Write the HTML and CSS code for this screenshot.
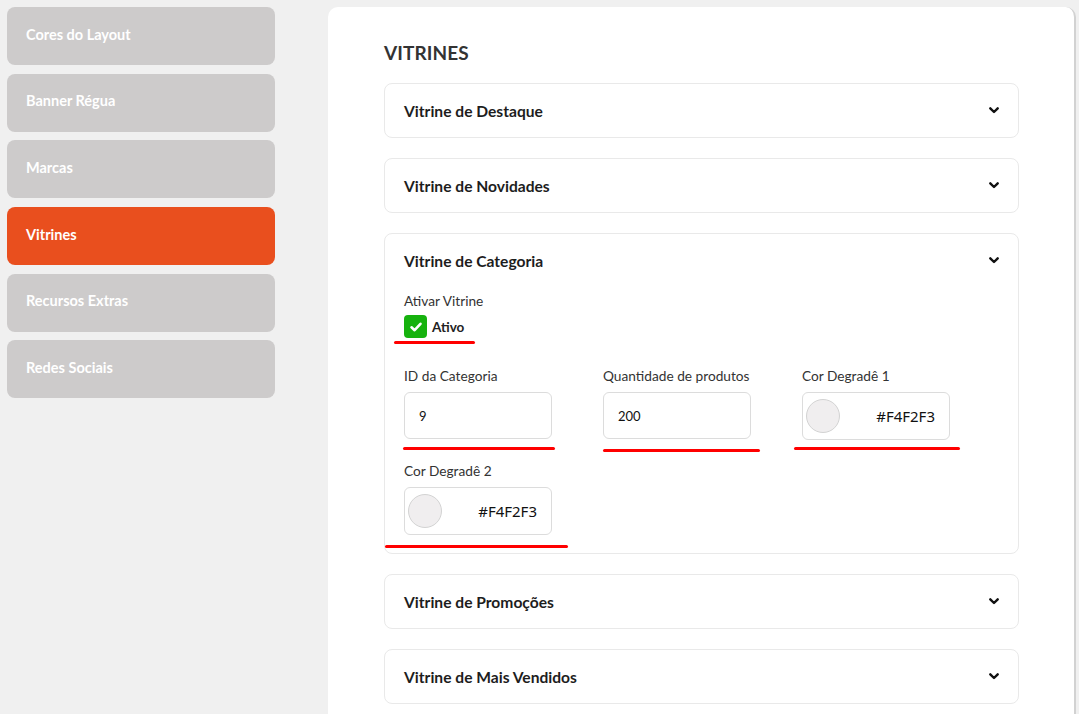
FILE: index.html
```html
<!DOCTYPE html>
<html lang="pt-BR">
<head>
<meta charset="utf-8">
<title>Vitrines</title>
<link rel="stylesheet" href="styles.css">
</head>
<body>
<div class="layout">
  <nav class="sidebar">
    <a class="side-item">Cores do Layout</a>
    <a class="side-item">Banner Régua</a>
    <a class="side-item">Marcas</a>
    <a class="side-item active">Vitrines</a>
    <a class="side-item">Recursos Extras</a>
    <a class="side-item">Redes Sociais</a>
  </nav>
  <main class="panel">
    <h1 class="title">VITRINES</h1>
    <div class="cards">
      <section class="card">
        <div class="card-head"><span>Vitrine de Destaque</span><svg class="chev" viewBox="0 0 10 7"><path d="M1.3 1.3 L5 5 L8.7 1.3"/></svg></div>
      </section>
      <section class="card">
        <div class="card-head"><span>Vitrine de Novidades</span><svg class="chev" viewBox="0 0 10 7"><path d="M1.3 1.3 L5 5 L8.7 1.3"/></svg></div>
      </section>
      <section class="card">
        <div class="card-head"><span>Vitrine de Categoria</span><svg class="chev" viewBox="0 0 10 7"><path d="M1.3 1.3 L5 5 L8.7 1.3"/></svg></div>
        <div class="card-body">
          <div class="label">Ativar Vitrine</div>
          <div class="check-row">
            <span class="checkbox"><svg viewBox="0 0 16 16"><path d="M3.5 8.3 L6.6 11.2 L12.5 4.8"/></svg></span>
            <span class="check-label">Ativo</span>
            <span class="mark mark-check"></span>
          </div>
          <div class="fields">
            <div class="field">
              <div class="label">ID da Categoria</div>
              <div class="input">9</div>
              <span class="mark mark-id"></span>
            </div>
            <div class="field">
              <div class="label">Quantidade de produtos</div>
              <div class="input">200</div>
              <span class="mark mark-qty"></span>
            </div>
            <div class="field">
              <div class="label">Cor Degradê 1</div>
              <div class="input color"><span class="swatch"></span><span class="hex">#F4F2F3</span></div>
              <span class="mark mark-c1"></span>
            </div>
            <div class="field">
              <div class="label">Cor Degradê 2</div>
              <div class="input color"><span class="swatch"></span><span class="hex">#F4F2F3</span></div>
              <span class="mark mark-c2"></span>
            </div>
          </div>
        </div>
      </section>
      <section class="card">
        <div class="card-head"><span>Vitrine de Promoções</span><svg class="chev" viewBox="0 0 10 7"><path d="M1.3 1.3 L5 5 L8.7 1.3"/></svg></div>
      </section>
      <section class="card">
        <div class="card-head"><span>Vitrine de Mais Vendidos</span><svg class="chev" viewBox="0 0 10 7"><path d="M1.3 1.3 L5 5 L8.7 1.3"/></svg></div>
      </section>
    </div>
  </main>
</div>
</body>
</html>
```
FILE: styles.css
```css
* { box-sizing: border-box; }
html, body { margin: 0; height: 100%; }
body {
  background: #f0f0f0;
  font-family: Lato, "Noto Sans", "Liberation Sans", sans-serif;
  color: #222;
  overflow: hidden;
}
.layout {
  display: flex;
  align-items: flex-start;
  padding: 7px 0 0 7px;
}
.sidebar {
  width: 268px;
  display: flex;
  flex-direction: column;
  gap: 8.7px;
  flex-shrink: 0;
}
.side-item {
  height: 58px;
  border-radius: 8px;
  background: #cdcbcb;
  color: #fff;
  font-weight: 700;
  font-size: 14.5px;
  display: flex;
  align-items: center;
  padding: 0 0 4px 19px;
}
.side-item.active {
  background: #e94f1e;
}
.panel {
  margin-left: 53px;
  width: 748px;
  min-height: 760px;
  background: #fff;
  border-radius: 10px 10px 0 0;
  border-right: 2px solid #d2d2d2;
  padding: 34px 55px 0 56px;
}
.title {
  margin: 0 0 18px;
  font-size: 19px;
  line-height: 24px;
  font-weight: 700;
  color: #333;
  letter-spacing: 0.1px;
}
.cards {
  display: flex;
  flex-direction: column;
  gap: 20px;
  width: 635px;
}
.card {
  border: 1px solid #e9e9e9;
  border-radius: 8px;
  background: #fff;
}
.card-head {
  height: 53px;
  display: flex;
  align-items: center;
  justify-content: space-between;
  padding: 0 19px 0 19px;
  font-size: 15.6px;
  font-weight: 700;
  color: #1d1d1d;
}
.chev {
  width: 10px;
  height: 7px;
  fill: none;
  stroke: #111;
  stroke-width: 2.4;
  stroke-linecap: round;
  stroke-linejoin: round;
  margin-top: -1px;
}
.card-body {
  padding: 5px 19px 18px;
}
.label {
  font-size: 13.7px;
  line-height: 18px;
  color: #333;
}
.check-row {
  position: relative;
  display: flex;
  align-items: center;
  gap: 5px;
  margin-top: 5px;
  height: 23px;
}
.checkbox {
  width: 23px;
  height: 23px;
  border-radius: 4px;
  background: #16b20e;
  display: flex;
  align-items: center;
  justify-content: center;
}
.checkbox svg {
  width: 16px;
  height: 16px;
  fill: none;
  stroke: #fff;
  stroke-width: 2.6;
  stroke-linecap: round;
  stroke-linejoin: round;
}
.check-label {
  font-size: 13.5px;
  font-weight: 700;
  color: #222;
}
.fields {
  display: grid;
  grid-template-columns: repeat(3, 148px);
  column-gap: 51px;
  row-gap: 22px;
  margin-top: 29px;
}
.field {
  position: relative;
}
.field .label {
  margin-bottom: 7px;
}
.input {
  height: 47px;
  border: 1px solid #dcdcdc;
  border-radius: 6px;
  display: flex;
  align-items: center;
  padding-left: 14px;
  font-size: 13px;
  color: #111;
}
.input.color {
  padding: 0 14px 0 3px;
  justify-content: space-between;
  height: 48px;
}
.swatch {
  width: 34px;
  height: 34px;
  border-radius: 50%;
  background: #f0eeef;
  border: 1px solid #d3d3d3;
}
.hex {
  font-family: "Noto Sans", "Liberation Sans", sans-serif;
  font-size: 15px;
  color: #111;
}
.mark {
  position: absolute;
  height: 3px;
  background: #f00;
  border-radius: 2px;
}
.mark-check { left: -10px; top: 26px; width: 81px; }
.mark-id { left: -1px; top: 80px; width: 152px; }
.mark-qty { left: 0; top: 82px; width: 157px; }
.mark-c1 { left: -8px; top: 80px; width: 166px; }
.mark-c2 { left: -19px; top: 83px; width: 183px; }
```
